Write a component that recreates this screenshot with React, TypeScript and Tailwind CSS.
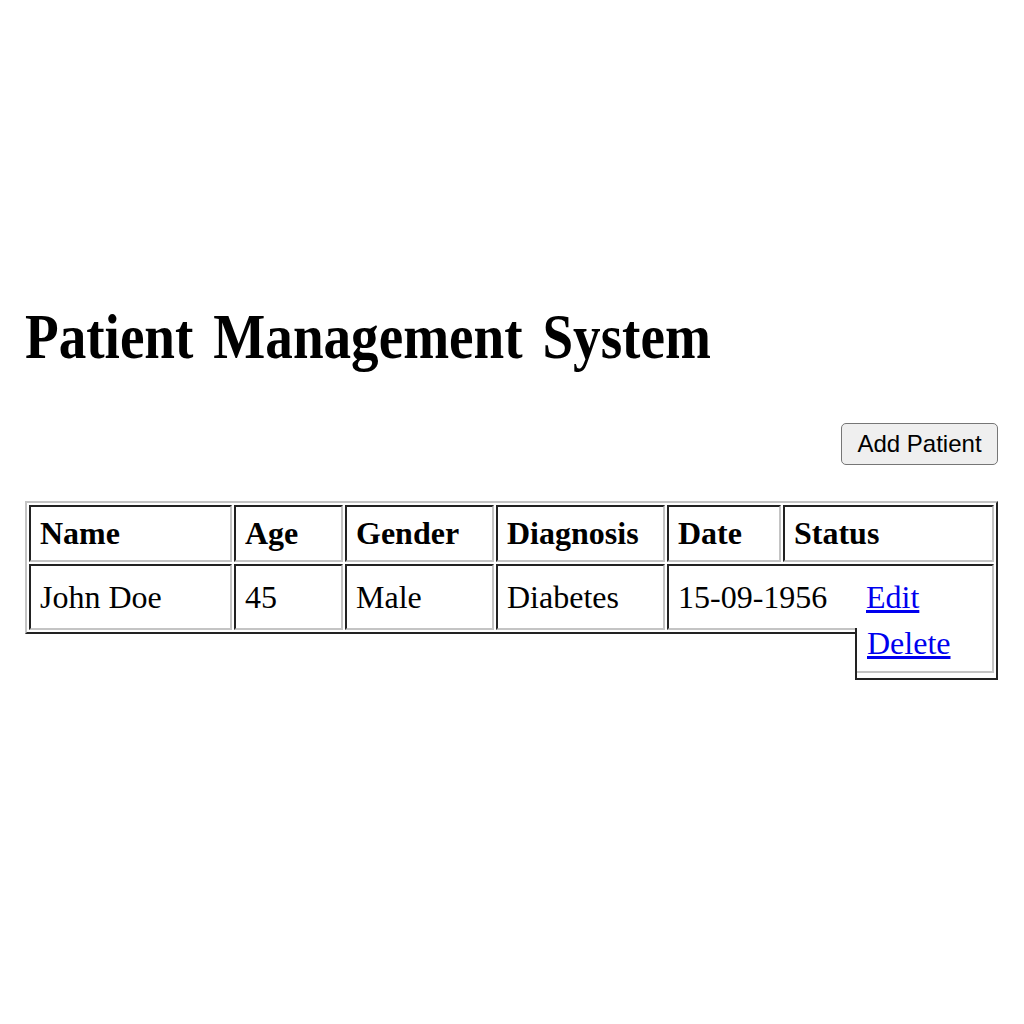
import React from "react";

interface Patient {
  name: string;
  age: number;
  gender: string;
  diagnosis: string;
  date: string;
}

const patients: Patient[] = [
  { name: "John Doe", age: 45, gender: "Male", diagnosis: "Diabetes", date: "15-09-1956" },
];

const headers = [
  { label: "Name", width: "w-[203px]" },
  { label: "Age", width: "w-[109px]" },
  { label: "Gender", width: "w-[149px]" },
  { label: "Diagnosis", width: "w-[169px]" },
  { label: "Date", width: "w-[114px]" },
  { label: "Status", width: "w-[211px]" },
];

// classic "border=1" look: cells inset, table outset
const cellBorder =
  "border-2 border-t-[#222] border-l-[#222] border-b-[#c4c4c4] border-r-[#c4c4c4]";

const App: React.FC = () => {
  return (
    <div className="min-h-screen bg-white pt-[302px] pl-[25px] pr-[26px] font-['Liberation_Serif',serif] text-black">
      <h1 className="origin-left scale-x-[0.875] whitespace-nowrap text-[63px] font-bold leading-[70px] [word-spacing:7px]">
        Patient Management System
      </h1>

      <div className="mt-[51px] flex justify-end">
        <button
          type="button"
          className="h-[42px] w-[157px] rounded-[5px] border border-[#767676] bg-[#efefef] font-['Liberation_Sans',sans-serif] text-[24px] leading-none text-black"
        >
          Add Patient
        </button>
      </div>

      <div className="relative mt-[36px] w-[973px]">
        <table className="w-[973px] table-fixed border-separate border-spacing-[2px] border-2 border-t-[#c4c4c4] border-l-[#c4c4c4] border-b-[#222] border-r-[#222] text-[32px]">
          <thead>
            <tr>
              {headers.map((h) => (
                <th
                  key={h.label}
                  className={`${h.width} h-[57px] ${cellBorder} pl-[9px] text-left align-middle font-bold leading-[37px]`}
                >
                  {h.label}
                </th>
              ))}
            </tr>
          </thead>
          <tbody>
            {patients.map((p) => (
              <tr key={p.name}>
                <td className={`h-[66px] ${cellBorder} pl-[9px] align-middle leading-[37px]`}>{p.name}</td>
                <td className={`${cellBorder} pl-[9px] align-middle leading-[37px]`}>{p.age}</td>
                <td className={`${cellBorder} pl-[9px] align-middle leading-[37px]`}>{p.gender}</td>
                <td className={`${cellBorder} pl-[9px] align-middle leading-[37px]`}>{p.diagnosis}</td>
                <td colSpan={2} className={`${cellBorder} pl-[9px] align-middle leading-[37px]`}>
                  <div className="flex items-center">
                    <span className="w-[188px]">{p.date}</span>
                    <a href="#" className="text-[#0000ee] underline">
                      Edit
                    </a>
                  </div>
                </td>
              </tr>
            ))}
          </tbody>
        </table>

        {/* the Delete link spills out below the table */}
        <div className="absolute left-[830px] top-[127px] h-[52px] w-[143px] border-2 border-t-0 border-[#222] bg-white pr-[2px] pb-[2px]">
          <div className="h-full border-r-2 border-b-2 border-[#c4c4c4] pl-[10px] text-[32px] leading-[37px]">
            <a href="#" className="-mt-[3px] block w-max text-[#0000ee] underline">
              Delete
            </a>
          </div>
        </div>
      </div>
    </div>
  );
};

export default App;
